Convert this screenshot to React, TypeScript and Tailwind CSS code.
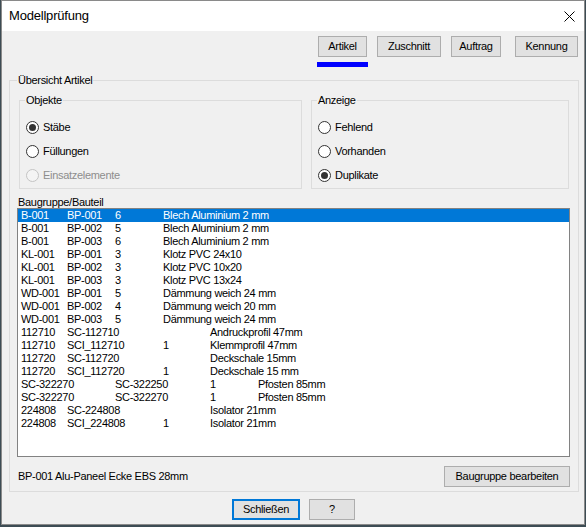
type Cell = [number, string];

const colStart = [
  "col-start-1",
  "col-start-2",
  "col-start-3",
  "col-start-4",
  "col-start-5",
  "col-start-6",
];

const rows: Cell[][] = [
  [[0, "B-001"], [1, "BP-001"], [2, "6"], [3, "Blech Aluminium 2 mm"]],
  [[0, "B-001"], [1, "BP-002"], [2, "5"], [3, "Blech Aluminium 2 mm"]],
  [[0, "B-001"], [1, "BP-003"], [2, "6"], [3, "Blech Aluminium 2 mm"]],
  [[0, "KL-001"], [1, "BP-001"], [2, "3"], [3, "Klotz PVC 24x10"]],
  [[0, "KL-001"], [1, "BP-002"], [2, "3"], [3, "Klotz PVC 10x20"]],
  [[0, "KL-001"], [1, "BP-003"], [2, "3"], [3, "Klotz PVC 13x24"]],
  [[0, "WD-001"], [1, "BP-001"], [2, "5"], [3, "Dämmung weich 24 mm"]],
  [[0, "WD-001"], [1, "BP-002"], [2, "4"], [3, "Dämmung weich 20 mm"]],
  [[0, "WD-001"], [1, "BP-003"], [2, "5"], [3, "Dämmung weich 24 mm"]],
  [[0, "112710"], [1, "SC-112710"], [4, "Andruckprofil 47mm"]],
  [[0, "112710"], [1, "SCI_112710"], [3, "1"], [4, "Klemmprofil 47mm"]],
  [[0, "112720"], [1, "SC-112720"], [4, "Deckschale 15mm"]],
  [[0, "112720"], [1, "SCI_112720"], [3, "1"], [4, "Deckschale 15 mm"]],
  [[0, "SC-322270"], [2, "SC-322250"], [4, "1"], [5, "Pfosten 85mm"]],
  [[0, "SC-322270"], [2, "SC-322270"], [4, "1"], [5, "Pfosten 85mm"]],
  [[0, "224808"], [1, "SC-224808"], [4, "Isolator 21mm"]],
  [[0, "224808"], [1, "SCI_224808"], [3, "1"], [4, "Isolator 21mm"]],
];

function Btn({ children, className = "" }: { children: React.ReactNode; className?: string }) {
  return (
    <button className={`flex h-[21px] items-center justify-center border border-[#adadad] bg-[#e1e1e1] ${className}`}>
      {children}
    </button>
  );
}

function Radio({ label, checked, disabled }: { label: string; checked?: boolean; disabled?: boolean }) {
  return (
    <div className="flex h-[24px] items-center">
      <span
        className={`ml-[1px] flex h-[13px] w-[13px] items-center justify-center rounded-full border ${
          disabled ? "border-[#c4c4c4] bg-[#f4f4f4]" : "border-[#333333] bg-white"
        }`}
      >
        {checked && <span className="h-[7px] w-[7px] rounded-full bg-[#333333]" />}
      </span>
      <span className={`ml-[4px] ${disabled ? "text-[#8d8d8d]" : ""}`}>{label}</span>
    </div>
  );
}

function Group({ title, className = "", children }: { title: string; className?: string; children: React.ReactNode }) {
  return (
    <fieldset className={`border border-[#dcdcdc] ${className}`}>
      <legend className="px-[1px] leading-[14px]">{title}</legend>
      {children}
    </fieldset>
  );
}

export default function App() {
  return (
    <div className="h-[527px] w-[586px] bg-[#3d4c54] pl-[1px] font-['Liberation_Sans',Arial,sans-serif] text-[11px] tracking-[-0.3px] text-black">
      <div className="flex h-[525px] w-[584px] flex-col border border-[#8a8a8a] bg-[#f0f0f0]">
        {/* title bar */}
        <div className="flex h-[30px] items-center justify-between bg-white pl-[7px] pr-[9px]">
          <span className="text-[13px] tracking-[-0.2px]">Modellprüfung</span>
          <svg width="11" height="11" viewBox="0 0 11 11">
            <path d="M0.5 0.5 L10.5 10.5 M10.5 0.5 L0.5 10.5" stroke="#000" strokeWidth="1" />
          </svg>
        </div>

        {/* tab buttons */}
        <div className="flex items-start justify-end pr-[6px] pt-[5px]">
          <div className="flex flex-col">
            <Btn className="w-[49px]">Artikel</Btn>
            <div className="-mx-[1px] mt-[5px] h-[5px] bg-[#0000ff]" />
          </div>
          <Btn className="ml-[10px] w-[64px]">Zuschnitt</Btn>
          <Btn className="ml-[10px] w-[50px]">Auftrag</Btn>
          <Btn className="ml-[14px] w-[63px]">Kennung</Btn>
        </div>

        <Group title="Übersicht Artikel" className="ml-[7px] mt-[6px] w-[570px] pb-[4px] pl-[7px] pr-[8px]">
          <div className="mt-[6px] flex">
            <Group title="Objekte" className="ml-[2px] w-[283px] pb-[1px] pl-[5px]">
              <div className="pt-[8px]">
                <Radio label="Stäbe" checked />
                <Radio label="Füllungen" />
                <Radio label="Einsatzelemente" disabled />
              </div>
            </Group>
            <Group title="Anzeige" className="ml-[9px] w-[258px] pb-[1px] pl-[5px]">
              <div className="pt-[8px]">
                <Radio label="Fehlend" />
                <Radio label="Vorhanden" />
                <Radio label="Duplikate" checked />
              </div>
            </Group>
          </div>

          <div className="ml-[1px] mt-[7px] leading-[12px]">Baugruppe/Bauteil</div>
          <div className="h-[249px] border border-[#828282] bg-white">
            {rows.map((row, i) => (
              <div
                key={i}
                className={`grid h-[13px] grid-cols-[46px_48px_48px_47px_48px_1fr] whitespace-nowrap pl-[3px] leading-[13px] ${
                  i === 0 ? "bg-[#0078d7] text-white" : ""
                }`}
              >
                {row.map(([c, t]) => (
                  <span key={c} className={`${colStart[c]} row-start-1`}>
                    {t}
                  </span>
                ))}
              </div>
            ))}
          </div>

          <div className="mt-[9px] flex h-[21px] items-center justify-between">
            <span className="ml-[1px]">BP-001 Alu-Paneel Ecke EBS 28mm</span>
            <Btn className="w-[126px]">Baugruppe bearbeiten</Btn>
          </div>
        </Group>

        <div className="mt-[7px] flex justify-center gap-[9px] pl-[1px]">
          <button className="flex h-[21px] w-[68px] items-center justify-center border-2 border-[#0078d7] bg-[#e1e1e1]">
            Schließen
          </button>
          <Btn className="w-[46px]">?</Btn>
        </div>
      </div>
    </div>
  );
}
